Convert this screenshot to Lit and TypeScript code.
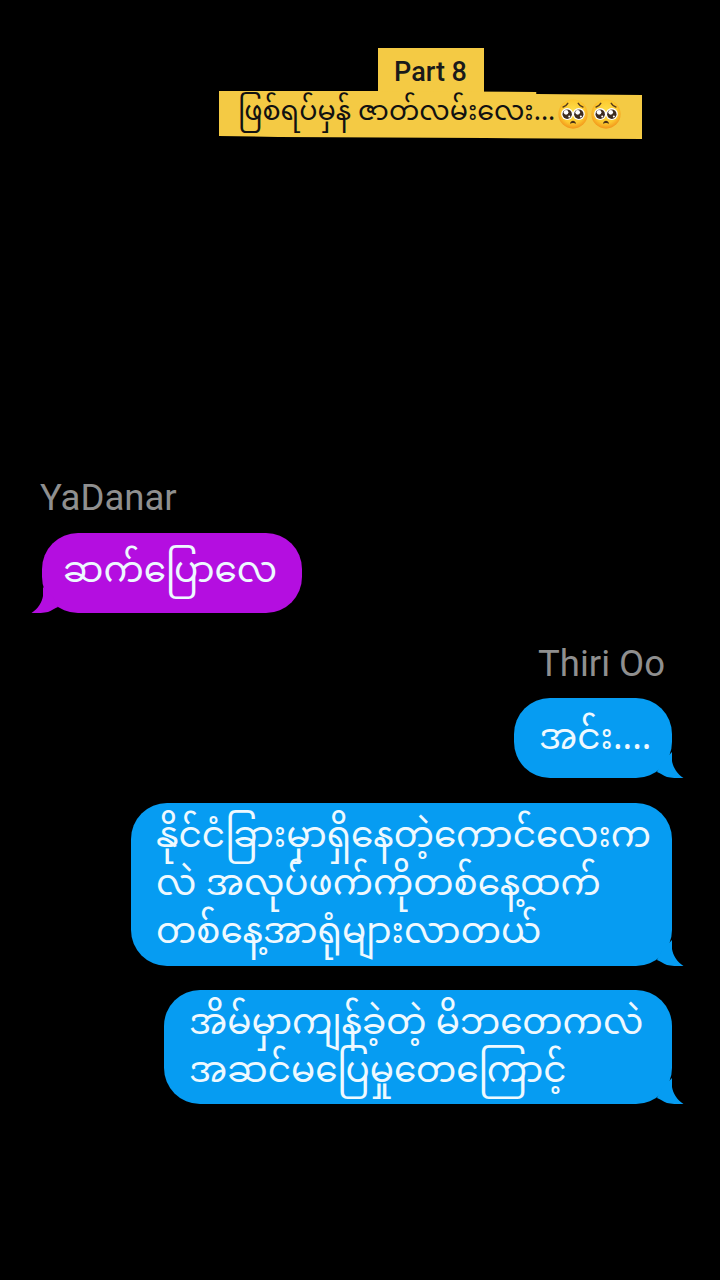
import { LitElement, html, css } from "lit";
import { customElement } from "lit/decorators.js";

const face = html`<svg class="emoji" viewBox="0 0 32 32" aria-hidden="true">
  <defs><radialGradient id="fg" cx="50%" cy="42%" r="56%"><stop offset="0" stop-color="#ffe14d"/><stop offset="0.7" stop-color="#fdc92f"/><stop offset="1" stop-color="#f39a1c"/></radialGradient></defs>
  <circle cx="16" cy="16" r="15.6" fill="url(#fg)"/>
  <circle cx="9.8" cy="16" r="6.4" fill="#fff"/><circle cx="22.2" cy="16" r="6.4" fill="#fff"/>
  <circle cx="9.8" cy="16.2" r="5" fill="#3d2c20"/><circle cx="22.2" cy="16.2" r="5" fill="#3d2c20"/>
  <circle cx="8.6" cy="14.2" r="2.5" fill="#fff"/><circle cx="21" cy="14.2" r="2.5" fill="#fff"/>
  <circle cx="12" cy="18.6" r="1.1" fill="#fff"/><circle cx="24.4" cy="18.6" r="1.1" fill="#fff"/>
  <path d="M5.5 8.6C7.4 8 9.2 6.6 10.4 4.6M26.5 8.6C24.6 8 22.8 6.6 21.6 4.6" stroke="#5a3d1c" stroke-width="1.6" fill="none" stroke-linecap="round"/>
  <path d="M12.6 26.4c.6-2.2 2-3.2 3.4-3.2s2.8 1 3.4 3.2c-2.2-.9-4.6-.9-6.8 0Z" fill="#4a3118"/>
</svg>`;

@customElement("app-root")
export class AppRoot extends LitElement {
  static styles = css`
    :host { display: block; width: 720px; height: 1280px; background: #000; font-family: "Noto Sans Myanmar", "Padauk", "Noto Sans", Roboto, sans-serif; overflow: hidden; }
    .page { display: flex; flex-direction: column; height: 1280px; }
    .title { display: flex; flex-direction: column; align-items: center; padding: 48px 0 0 141px; height: 91px; margin-bottom: 339px; }
    .part { background: #f4ca44; color: #1a1a1a; font: 500 27px/48px Roboto, sans-serif; width: 106px; text-align: center; height: 48px; }
    .sub { box-sizing: border-box; background: #f4ca44; color: #111; width: 423px; height: 49px; margin-top: -5px; padding: 0 0 5px 19px; display: flex; align-items: center; font-size: 27px; white-space: nowrap; clip-path: polygon(0 0, 36% 0, 75% 1px, 75% 3px, 100% 4px, 100% 48px, 63% 47px, 14% 46px, 0 45px); }
    .emoji { width: 30px; height: 30px; flex: none; margin: 0 0 -1px 3px; }
    .name { color: #8f8f8f; font: 400 36.5px/40px Roboto, sans-serif; }
    .name.l { padding-left: 40px; }
    .name.r { text-align: right; padding-right: 55px; }
    .row { display: flex; }
    .row.r { justify-content: flex-end; padding-right: 48px; }
    .row.l { padding-left: 42px; }
    .b { position: relative; box-sizing: border-box; color: #eef9ff; font-size: 35.85px; line-height: 48px; white-space: nowrap; border-radius: 36px; display: flex; flex-direction: column; justify-content: center; }
    .b.blue { background: #069cf2; padding: 5px 0 0 25px; }
    .b.purple { background: #b40ee0; padding: 2px 0 0 21px; }
    .b.w260 { width: 260px; height: 80px; }
    .b.w158 { width: 158px; height: 80px; }
    .b.w541 { width: 541px; height: 163px; }
    .b.w508 { width: 508px; height: 114px; }
    .m14 { margin-top: 14px; }
    .m15 { margin-top: 15px; }
    .m24 { margin-top: 24px; }
    .m25 { margin-top: 25px; }
    .m31 { margin-top: 31px; }
    .tail { position: absolute; bottom: 0; width: 32px; height: 26px; }
    .tail.r { right: -12px; fill: #069cf2; }
    .tail.l { left: -11px; fill: #b40ee0; transform: scaleX(-1); }
  `;

  render() {
    const d = "M20 0V9C21 15 25 22 31.5 26C25 26 19 26 15 25C11 23.5 8 21 5 20L10 10Z";
    const tailR = html`<svg class="tail r" viewBox="0 0 32 26"><path d=${d}/></svg>`;
    const tailL = html`<svg class="tail l" viewBox="0 0 32 26"><path d=${d}/></svg>`;
    return html`<div class="page">
      <div class="title">
        <div class="part">Part 8</div>
        <div class="sub" lang="my"><span>ဖြစ်ရပ်မှန် ဇာတ်လမ်းလေး...</span>${face}${face}</div>
      </div>
      <div class="name l">YaDanar</div>
      <div class="row l m15"><div class="b purple w260" lang="my"><span>ဆက်ပြောလေ</span>${tailL}</div></div>
      <div class="name r m31">Thiri Oo</div>
      <div class="row r m14"><div class="b blue w158" lang="my"><span>အင်း....</span>${tailR}</div></div>
      <div class="row r m25"><div class="b blue w541" lang="my"><span>နိုင်ငံခြားမှာရှိနေတဲ့ကောင်လေးက</span><span>လဲ အလုပ်ဖက်ကိုတစ်နေ့ထက်</span><span>တစ်နေ့အာရုံများလာတယ်</span>${tailR}</div></div>
      <div class="row r m24"><div class="b blue w508" lang="my"><span>အိမ်မှာကျန်ခဲ့တဲ့ မိဘတေကလဲ</span><span>အဆင်မပြေမှုတေကြောင့်</span>${tailR}</div></div>
    </div>`;
  }
}
